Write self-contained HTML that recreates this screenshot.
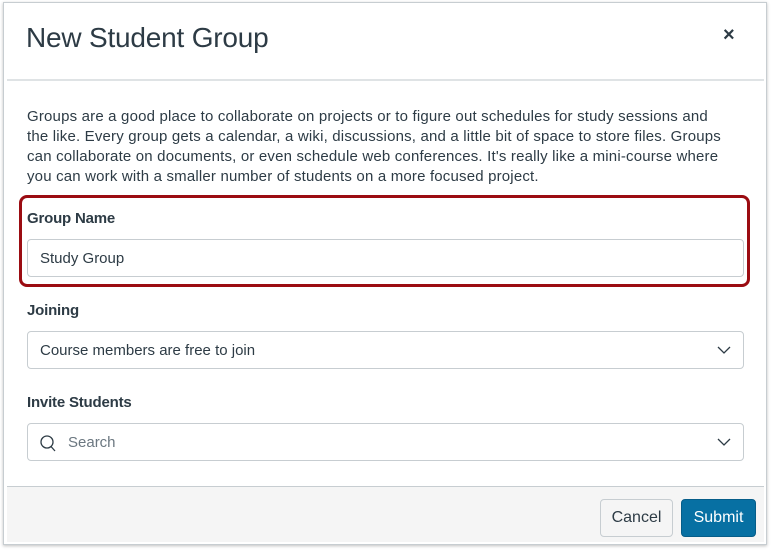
<!DOCTYPE html>
<html><head><style>
*{box-sizing:border-box;margin:0;padding:0}
body{width:771px;height:550px;background:#fff;font-family:"Liberation Sans",sans-serif;color:#2d3b45;position:relative;overflow:hidden}
.dlg{position:absolute;left:3px;top:2px;width:764px;height:543px;border:1px solid #c7cdd1;box-shadow:0 1px 3px rgba(0,0,0,.25);background:#fff}
.title{position:absolute;left:26px;top:22px;font-size:28px;font-weight:normal;letter-spacing:-0.2px;color:#2d3b45}
.x{position:absolute;left:723px;top:24px;font-size:20px;font-weight:bold}
.hr{position:absolute;left:7px;top:79px;width:757px;height:2px;background:#dfe3e5}
.p{position:absolute;left:27px;top:107px;width:740px;font-size:15px;line-height:20px;white-space:nowrap;letter-spacing:0.18px}
.lab{position:absolute;left:27px;font-size:15px;font-weight:bold;letter-spacing:-0.2px}
.inp{position:absolute;left:27px;width:717px;height:38px;border:1px solid #c7cdd1;border-radius:4px;font-size:15px;padding:10px 12px}
.hl{position:absolute;left:19px;top:195px;width:731px;height:92px;border:3px solid #9b0c12;border-radius:8px}
.chev{position:absolute;right:12px;top:13px}
.foot{position:absolute;left:7px;top:486px;width:757px;height:56px;background:#f5f5f5;border-top:1px solid #c7cdd1}
.btn{position:absolute;top:499px;height:38px;border-radius:4px;font-size:16px;padding:9px 0;text-align:center}
</style></head><body>
<div class="dlg"></div>
<div class="title">New Student Group</div>
<div class="x">×</div>
<div class="hr"></div>
<div class="p">Groups are a good place to collaborate on projects or to figure out schedules for study sessions and<br>the like. Every group gets a calendar, a wiki, discussions, and a little bit of space to store files. Groups<br>can collaborate on documents, or even schedule web conferences. It's really like a mini-course where<br>you can work with a smaller number of students on a more focused project.</div>
<div class="hl"></div>
<div class="lab" style="top:210px">Group Name</div>
<div class="inp" style="top:239px">Study Group</div>
<div class="lab" style="top:302px">Joining</div>
<div class="inp" style="top:331px">Course members are free to join<svg class="chev" width="14" height="10" viewBox="0 0 14 10"><path d="M1 2l6 6 6-6" fill="none" stroke="#2d3b45" stroke-width="1.3"/></svg></div>
<div class="lab" style="top:394px">Invite Students</div>
<div class="inp" style="top:423px;padding-left:40px;color:#6b7780">Search<svg style="position:absolute;left:12px;top:11px" width="16" height="17" viewBox="0 0 16 17"><circle cx="7" cy="7" r="6" fill="none" stroke="#2d3b45" stroke-width="1.3"/><path d="M11 11.5l4 4.5" stroke="#2d3b45" stroke-width="1.3"/></svg><svg class="chev" width="14" height="10" viewBox="0 0 14 10"><path d="M1 2l6 6 6-6" fill="none" stroke="#2d3b45" stroke-width="1.3"/></svg></div>
<div class="foot"></div>
<div class="btn" style="left:600px;width:73px;background:#f5f5f5;border:1px solid #c7cdd1;color:#2d3b45">Cancel</div>
<div class="btn" style="left:681px;width:75px;background:#0770a3;border:1px solid #065d89;color:#fff">Submit</div>
</body></html>
